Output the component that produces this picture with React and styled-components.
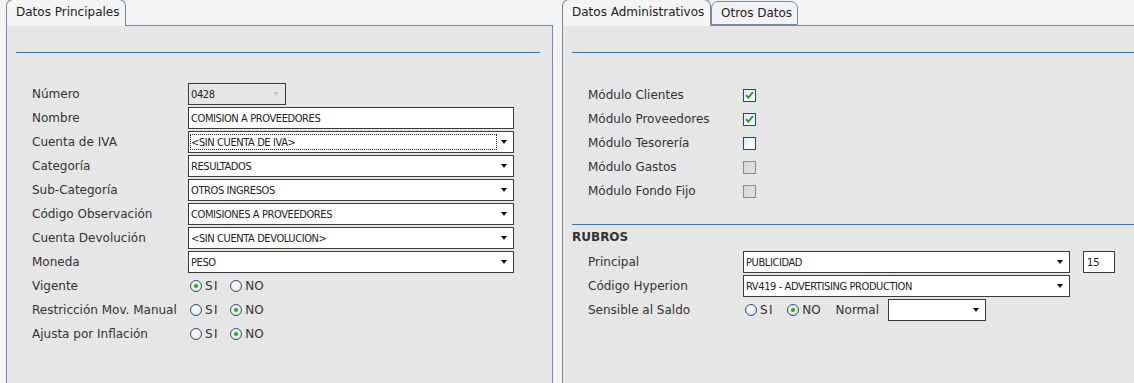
import React from 'react';
import styled, { createGlobalStyle, css } from 'styled-components';

const GlobalStyle = createGlobalStyle`
  html, body {
    margin: 0;
    background: #f4f4f4;
    overflow: hidden;
  }
`;

const labelFont = `"DejaVu Sans", Verdana, sans-serif`;
const fieldFont = `"DejaVu Sans Condensed", "Liberation Sans", Arial, sans-serif`;

const Page = styled.div`
  display: flex;
  gap: 9px;
  padding-left: 6px;
  height: 383px;
  overflow: hidden;
  font-family: ${labelFont};
`;

const Column = styled.div`
  flex-shrink: 0;
  width: ${p => p.width}px;
  display: flex;
  flex-direction: column;
`;

const TabStrip = styled.div`
  display: flex;
  align-items: flex-end;
  flex-shrink: 0;
  height: 26px;
  position: relative;
  z-index: 1;
  margin-bottom: -1px;
`;

const Tab = styled.div`
  box-sizing: border-box;
  width: ${p => p.width}px;
  border: 1px solid #7b8995;
  border-bottom: none;
  border-radius: 7px 7px 0 0;
  font-size: 12px;
  color: #222;
  padding-left: 9px;
  ${p => p.active ? css`
    height: 27px;
    line-height: 25px;
    background: #f4f4f4;
  ` : css`
    height: 24px;
    line-height: 23px;
    background: #f2f2f2;
    border-bottom: 1px solid #7b8995;
    margin-bottom: 1px;
  `}
`;

const Panel = styled.div`
  box-sizing: border-box;
  flex-shrink: 0;
  border: 1px solid #7b8995;
  background: #e6e6e6;
  height: 420px;
  padding: 26px 12px 0 9px;
`;

const Rule = styled.div`
  height: 1px;
  background: #3674ab;
  margin-top: ${p => p.top || 0}px;
`;

const Form = styled.div`
  display: grid;
  grid-template-columns: ${p => p.labelWidth}px auto;
  grid-auto-rows: 22px;
  row-gap: 2px;
  padding-left: ${p => p.indent}px;
  margin-top: ${p => p.top || 0}px;
  align-items: center;
  justify-items: start;
`;

const Label = styled.div`
  font-size: 12px;
  color: #333;
  white-space: nowrap;
  line-height: 22px;
`;

const SectionTitle = styled.div`
  height: 26px;
  line-height: 25px;
  font-size: 12px;
  font-weight: bold;
  color: #333;
`;

const SelectBox = styled.div`
  box-sizing: border-box;
  position: relative;
  width: ${p => p.width}px;
  height: 22px;
  border: 1px solid #3a3a3a;
  background: ${p => p.disabled ? 'transparent' : '#fff'};
  font-family: ${fieldFont};
  font-size: 11px;
  letter-spacing: -0.4px;
  color: #222;
  line-height: 21px;
  padding-left: 2px;
  white-space: nowrap;
`;

const Focus = styled.div`
  position: absolute;
  left: 1px;
  top: 2px;
  bottom: 2px;
  right: 16px;
  border: 1px dotted #222;
`;

const Arrow = styled.span`
  position: absolute;
  right: 6px;
  top: 8px;
  width: 0;
  height: 0;
  border-left: 3.5px solid transparent;
  border-right: 3.5px solid transparent;
  border-top: 4px solid ${p => p.muted ? '#c4c4c4' : '#111'};
`;

const Inline = styled.div`
  display: flex;
  align-items: center;
  gap: ${p => p.gap || 0}px;
`;

const RadioGroup = styled.div`
  display: flex;
  align-items: center;
  gap: ${p => p.spread}px;
  padding-left: 2px;
`;

const RadioOption = styled.label`
  display: flex;
  align-items: center;
  gap: 3px;
  font-size: 12px;
  color: #333;
`;

const RadioCircle = styled.span`
  box-sizing: border-box;
  width: 12px;
  height: 12px;
  border-radius: 50%;
  border: 1px solid #2f4f72;
  background: radial-gradient(circle at 40% 40%, #ffffff 0%, #f0f0f0 50%, #cfd3d8 100%);
  display: flex;
  align-items: center;
  justify-content: center;
  &::after {
    content: '';
    display: ${p => p.checked ? 'block' : 'none'};
    width: 4px;
    height: 4px;
    border-radius: 50%;
    background: #22aa22;
    box-shadow: 0 0 0 1px #d8f0d8;
  }
`;

const RadioText = styled.span`
  letter-spacing: 1.5px;
`;

const CheckBox = styled.span`
  box-sizing: border-box;
  width: 13px;
  height: 13px;
  border: 1px solid ${p => p.disabled ? '#8c8c8c' : '#1d4c7c'};
  background: ${p => p.disabled
    ? 'linear-gradient(135deg, #d6d6d6, #e2e2e2)'
    : 'linear-gradient(135deg, #e4e6e4, #ffffff 70%)'};
  display: flex;
  align-items: center;
  justify-content: center;
`;

const NumberBox = styled.div`
  box-sizing: border-box;
  width: 32px;
  height: 22px;
  border: 1px solid #3a3a3a;
  background: #fff;
  font-family: ${fieldFont};
  font-size: 11px;
  line-height: 21px;
  padding-left: 3px;
  color: #222;
`;

function Select({ width, value, focused, disabled }) {
  return (
    <SelectBox width={width} disabled={disabled}>
      {value}
      {focused && <Focus />}
      <Arrow muted={disabled} />
    </SelectBox>
  );
}

function Radios({ value, spread = 11 }) {
  return (
    <RadioGroup spread={spread}>
      <RadioOption>
        <RadioCircle checked={value === 'SI'} />
        <RadioText>SI</RadioText>
      </RadioOption>
      <RadioOption>
        <RadioCircle checked={value === 'NO'} />
        <span>NO</span>
      </RadioOption>
    </RadioGroup>
  );
}

function Check({ checked, disabled }) {
  return (
    <CheckBox disabled={disabled}>
      {checked && (
        <svg width="9" height="8" viewBox="0 0 9 8">
          <path d="M1 4.2 L3.4 6.6 L8 1.2" stroke="#1f9a1f" strokeWidth="1.8" fill="none" />
        </svg>
      )}
    </CheckBox>
  );
}

const fields = [
  { label: 'Cuenta de IVA', value: '<SIN CUENTA DE IVA>', focused: true },
  { label: 'Categoría', value: 'RESULTADOS' },
  { label: 'Sub-Categoría', value: 'OTROS INGRESOS' },
  { label: 'Código Observación', value: 'COMISIONES A PROVEEDORES' },
  { label: 'Cuenta Devolución', value: '<SIN CUENTA DEVOLUCION>' },
  { label: 'Moneda', value: 'PESO' },
];

const radios = [
  { label: 'Vigente', value: 'SI' },
  { label: 'Restricción Mov. Manual', value: 'NO' },
  { label: 'Ajusta por Inflación', value: 'NO' },
];

const modulos = [
  { label: 'Módulo Clientes', checked: true },
  { label: 'Módulo Proveedores', checked: true },
  { label: 'Módulo Tesorería' },
  { label: 'Módulo Gastos', disabled: true },
  { label: 'Módulo Fondo Fijo', disabled: true },
];

export default function App() {
  return (
    <>
      <GlobalStyle />
      <Page>
        <Column width={547}>
          <TabStrip>
            <Tab active width={120}>Datos Principales</Tab>
          </TabStrip>
          <Panel>
            <Rule />
            <Form labelWidth={156} indent={16} top={30}>
              <Label>Número</Label>
              <Select width={98} value="0428" disabled />
              <Label>Nombre</Label>
              <SelectBox width={326}>COMISION A PROVEEDORES</SelectBox>
              {fields.map(f => (
                <React.Fragment key={f.label}>
                  <Label>{f.label}</Label>
                  <Select width={326} value={f.value} focused={f.focused} />
                </React.Fragment>
              ))}
              {radios.map(r => (
                <React.Fragment key={r.label}>
                  <Label>{r.label}</Label>
                  <Radios value={r.value} />
                </React.Fragment>
              ))}
            </Form>
          </Panel>
        </Column>
        <Column width={600}>
          <TabStrip>
            <Tab active width={149}>Datos Administrativos</Tab>
            <Tab width={87}>Otros Datos</Tab>
          </TabStrip>
          <Panel>
            <Rule />
            <Form labelWidth={155} indent={16} top={31}>
              {modulos.map(m => (
                <React.Fragment key={m.label}>
                  <Label>{m.label}</Label>
                  <Check checked={m.checked} disabled={m.disabled} />
                </React.Fragment>
              ))}
            </Form>
            <Rule top={22} />
            <SectionTitle>RUBROS</SectionTitle>
            <Form labelWidth={155} indent={16}>
              <Label>Principal</Label>
              <Inline gap={13}>
                <Select width={327} value="PUBLICIDAD" />
                <NumberBox>15</NumberBox>
              </Inline>
              <Label>Código Hyperion</Label>
              <Select width={327} value="RV419 - ADVERTISING PRODUCTION" />
              <Label>Sensible al Saldo</Label>
              <Inline gap={15}>
                <Radios value="NO" spread={13} />
                <Inline gap={9}>
                  <Label>Normal</Label>
                  <Select width={98} value="" />
                </Inline>
              </Inline>
            </Form>
          </Panel>
        </Column>
      </Page>
    </>
  );
}
